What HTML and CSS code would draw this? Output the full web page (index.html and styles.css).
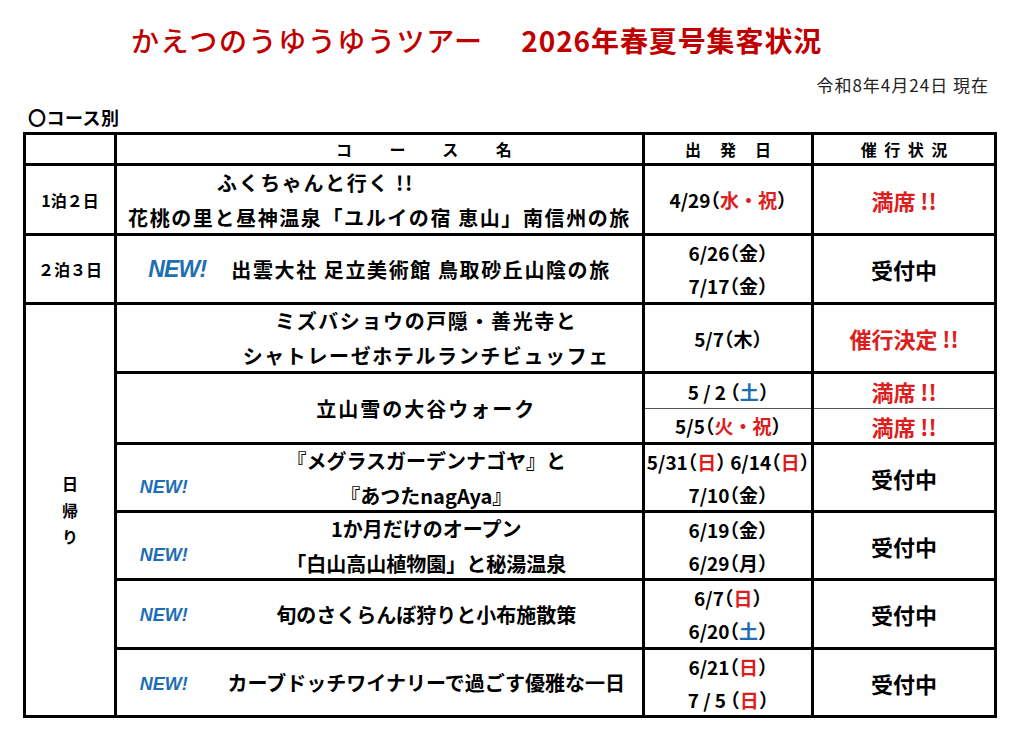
FILE: index.html
```html
<!DOCTYPE html>
<html lang="ja">
<head>
<meta charset="utf-8">
<title>かえつのうゆうゆうツアー 2026年春夏号集客状況</title>
<link rel="stylesheet" href="styles.css">
</head>
<body>
  <h1 class="title"><span class="t1">かえつのうゆうゆうツアー</span>　<span class="t2">2026年春夏号集客状況</span></h1>
  <p class="asof">令和8年4月24日 現在</p>
  <p class="section">〇コース別</p>
  <table class="tours">
    <colgroup>
      <col class="c-kind"><col class="c-new"><col class="c-name"><col class="c-date"><col class="c-status">
    </colgroup>
    <thead>
      <tr class="r-head">
        <th></th>
        <th class="h-name" colspan="2">コース名</th>
        <th class="h-date">出発日</th>
        <th class="h-status">催行状況</th>
      </tr>
    </thead>
    <tbody>
      <tr class="r-70">
        <th class="kind">1泊２日</th>
        <td class="name wide" colspan="2"><span class="ln shift">ふくちゃんと行く !!</span><span class="ln">花桃の里と昼神温泉「ユルイの宿 恵山」南信州の旅</span></td>
        <td class="date">4/29（<span class="red">水・祝</span>）</td>
        <td class="status red">満席 !!</td>
      </tr>
      <tr class="r-69">
        <th class="kind">２泊３日</th>
        <td class="name wide" colspan="2"><span class="new-big">NEW!</span>出雲大社 足立美術館 鳥取砂丘山陰の旅</td>
        <td class="date"><span class="ln">6/26（金）</span><span class="ln">7/17（金）</span></td>
        <td class="status">受付中</td>
      </tr>
      <tr class="r-69">
        <th class="kind day" rowspan="7"><span class="ln">日</span><span class="ln">帰</span><span class="ln">り</span></th>
        <td class="new"></td>
        <td class="name wide"><span class="ln">ミズバショウの戸隠・善光寺と</span><span class="ln">シャトレーゼホテルランチビュッフェ</span></td>
        <td class="date">5/7（木）</td>
        <td class="status red">催行決定 !!</td>
      </tr>
      <tr class="r-36 split-top">
        <td class="new" rowspan="2"></td>
        <td class="name wider" rowspan="2">立山雪の大谷ウォーク</td>
        <td class="date">5 / 2 （<span class="blue">土</span>）</td>
        <td class="status red">満席 !!</td>
      </tr>
      <tr class="r-35 split-bottom">
        <td class="date">5/5（<span class="red">火・祝</span>）</td>
        <td class="status red">満席 !!</td>
      </tr>
      <tr class="r-68">
        <td class="new low"><span class="new-tag">NEW!</span></td>
        <td class="name"><span class="ln">『メグラスガーデンナゴヤ』と</span><span class="ln">『あつたnagAya』</span></td>
        <td class="date"><span class="ln">5/31（<span class="red">日</span>） 6/14（<span class="red">日</span>）</span><span class="ln">7/10（金）</span></td>
        <td class="status">受付中</td>
      </tr>
      <tr class="r-68">
        <td class="new low"><span class="new-tag">NEW!</span></td>
        <td class="name"><span class="ln">1か月だけのオープン</span><span class="ln">「白山高山植物園」と秘湯温泉</span></td>
        <td class="date"><span class="ln">6/19（金）</span><span class="ln">6/29（月）</span></td>
        <td class="status">受付中</td>
      </tr>
      <tr class="r-69">
        <td class="new"><span class="new-tag">NEW!</span></td>
        <td class="name">旬のさくらんぼ狩りと小布施散策</td>
        <td class="date"><span class="ln">6/7（<span class="red">日</span>）</span><span class="ln">6/20（<span class="blue">土</span>）</span></td>
        <td class="status">受付中</td>
      </tr>
      <tr class="r-68">
        <td class="new"><span class="new-tag">NEW!</span></td>
        <td class="name">カーブドッチワイナリーで過ごす優雅な一日</td>
        <td class="date"><span class="ln">6/21（<span class="red">日</span>）</span><span class="ln">7 / 5 （<span class="red">日</span>）</span></td>
        <td class="status">受付中</td>
      </tr>
    </tbody>
  </table>
</body>
</html>
```

FILE: styles.css
```css
* { box-sizing: border-box; }

html, body {
  margin: 0;
  padding: 0;
  background: #fff;
}

body {
  width: 1017px;
  font-family: "Noto Sans CJK JP", "Noto Sans", sans-serif;
  color: #000;
}

.title {
  margin: 0;
  height: 60px;
  padding: 20px 0 0 131px;
  font-size: 28px;
  line-height: 40px;
  letter-spacing: 1.6px;
  font-weight: 500;
  color: #c00000;
  white-space: nowrap;
}

.title .t2 {
  margin-left: 8px;
  font-weight: 700;
  letter-spacing: 0.9px;
}

.asof {
  margin: 13px 0 0;
  padding-right: 28px;
  text-align: right;
  font-size: 17px;
  line-height: 24px;
  letter-spacing: 1px;
  color: #222;
}

.section {
  margin: 9px 0 0;
  padding-left: 28px;
  font-size: 18px;
  line-height: 22px;
  letter-spacing: 0.5px;
  font-weight: 700;
}

.tours {
  margin: 4px 0 0 23px;
  width: 974px;
  border-collapse: collapse;
  table-layout: fixed;
}

.c-kind { width: 91px; }
.c-new { width: 95px; }
.c-name { width: 433px; }
.c-date { width: 169px; }
.c-status { width: 183px; }

.tours th,
.tours td {
  border: 3px solid #000;
  padding: 0;
  text-align: center;
  vertical-align: middle;
  font-weight: 700;
  white-space: nowrap;
}

.r-head { height: 31px; }
.r-70 { height: 70px; }
.r-69 { height: 69px; }
.r-68 { height: 68px; }
.r-36 { height: 36px; }
.r-35 { height: 35px; }

.r-head th {
  font-size: 16px;
  line-height: 20px;
}

.tours .h-name {
  text-align: left;
  padding-left: 219px;
  letter-spacing: 37.5px;
}

.tours .h-date {
  letter-spacing: 19px;
  padding-left: 19px;
}

.tours .h-status {
  letter-spacing: 7.5px;
  padding-left: 7.5px;
}

.ln { display: block; }
.ln:first-child { margin-top: -4px; }
.ln:last-child { margin-bottom: -4px; }

.kind {
  font-size: 16px;
  line-height: 20px;
}

.kind.day { line-height: 26.5px; }

.tours .new { border-right: none; }
.tours .new + .name { border-left: none; }
.tours .new.low { padding-top: 17px; }

.name {
  font-size: 20px;
  line-height: 35px;
}

.name.wide { letter-spacing: 1.6px; }
.name.wider { letter-spacing: 2px; }

.shift { padding-right: 128px; }

.new-big {
  display: inline-block;
  margin-right: 25px;
  font-family: "Liberation Sans", Arial, sans-serif;
  font-style: italic;
  font-weight: 700;
  font-size: 23px;
  letter-spacing: -0.8px;
  color: #1e6eb4;
  vertical-align: 1px;
}

.new-tag {
  font-family: "Liberation Sans", Arial, sans-serif;
  font-style: italic;
  font-weight: 700;
  font-size: 18px;
  color: #1e6eb4;
}

.date {
  font-size: 19px;
  line-height: 33px;
  font-feature-settings: "halt";
}

.date .red,
.date .blue { font-feature-settings: normal; }

.status {
  font-size: 22px;
  line-height: 30px;
}

.red { color: #dc1e1e; }
.blue { color: #1e6eb4; }

.tours .split-top .date,
.tours .split-top .status { border-bottom: 1px solid #555; }

.tours .split-bottom .date,
.tours .split-bottom .status { border-top: 1px solid #555; }
```
